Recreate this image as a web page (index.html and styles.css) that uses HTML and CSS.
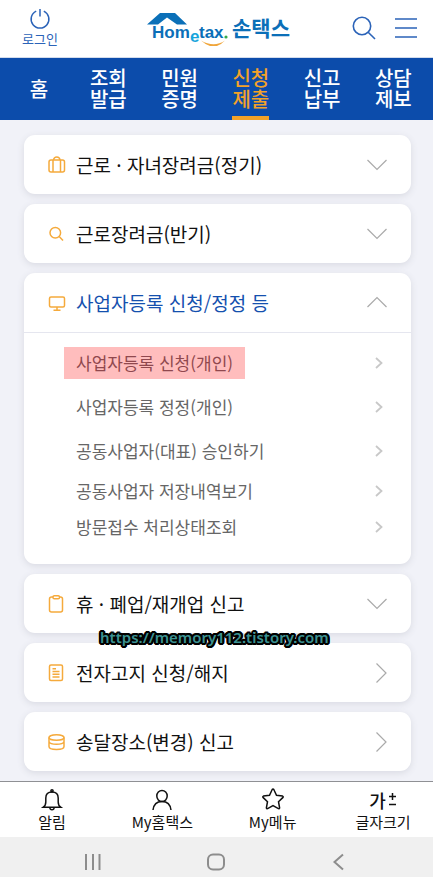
FILE: index.html
```html
<!DOCTYPE html>
<html lang="ko">
<head>
<meta charset="utf-8">
<meta name="viewport" content="width=device-width, initial-scale=1">
<title>Hometax 손택스</title>
<link rel="stylesheet" href="styles.css">
</head>
<body>
<header class="top">
  <a class="login" href="#">
    <svg width="22" height="22" viewBox="0 0 22 22"><path d="M7.2 3.1A8.9 8.9 0 1 0 14.8 3.1M11 1v7.500"/></svg>
    <span>로그인</span>
  </a>
  <a class="logo" href="#">
    <svg width="146" height="36" viewBox="0 0 146 36">
      <path class="roof" d="M0 14.500 13 3H28L40 14.500H30L20 7.500 11 14.500Z"/>
      <text class="latin" x="5" y="28">Hom</text>
      <text class="latin e" x="43" y="32">e</text>
      <text class="latin" x="52" y="28">tax</text>
      <circle class="dot" cx="79" cy="27" r="1.600"/>
      <path class="smile" d="M54 30.500Q67 38 78 30.500Q67 42.500 54 30.500Z"/>
      <text class="hangul" x="85" y="26">손택스</text>
    </svg>
  </a>
  <div class="tools">
    <button type="button" aria-label="검색"><svg width="24" height="24" viewBox="0 0 24 24"><circle cx="10" cy="10" r="8.700"/><path d="M16.200 16.200 23 23"/></svg></button>
    <button type="button" aria-label="전체 메뉴"><svg width="24" height="24" viewBox="0 0 24 24"><path d="M1 3h22M1 12h22M1 21h22"/></svg></button>
  </div>
</header>

<nav class="tabs">
  <a href="#"><span>홈</span></a>
  <a href="#"><span>조회<br>발급</span></a>
  <a href="#"><span>민원<br>증명</span></a>
  <a href="#" class="current"><span>신청<br>제출</span></a>
  <a href="#"><span>신고<br>납부</span></a>
  <a href="#"><span>상담<br>제보</span></a>
</nav>

<main>
  <section class="card">
    <button type="button" class="head">
      <svg class="icon" width="18" height="18" viewBox="0 0 18 18"><rect x="1" y="4" width="15.500" height="12" rx="2"/><path d="M5 4v12M12.500 4v12M5.500 4Q6 1 8.800 1T12 4"/></svg>
      <span class="title">근로 · 자녀장려금(정기)</span>
      <svg class="arrow" width="20" height="20" viewBox="0 0 20 20"><path d="M.500 5 10 14.500 19.500 5"/></svg>
    </button>
  </section>
  <section class="card">
    <button type="button" class="head">
      <svg class="icon" width="18" height="18" viewBox="0 0 18 18"><circle cx="7.300" cy="7.700" r="5.300"/><path d="M11.200 11.600 15 15.500"/></svg>
      <span class="title">근로장려금(반기)</span>
      <svg class="arrow" width="20" height="20" viewBox="0 0 20 20"><path d="M.500 5 10 14.500 19.500 5"/></svg>
    </button>
  </section>
  <section class="card open">
    <button type="button" class="head">
      <svg class="icon" width="18" height="18" viewBox="0 0 18 18"><rect x="1.500" y="3" width="15" height="10" rx="1.500"/><path d="M9 13v3M5.500 16.200h7"/></svg>
      <span class="title">사업자등록 신청/정정 등</span>
      <svg class="arrow" width="20" height="20" viewBox="0 0 20 20"><path d="M.500 14 10 4.500 19.500 14"/></svg>
    </button>
    <ul class="sub">
      <li><a href="#"><span class="mark">사업자등록 신청(개인)</span><svg width="8" height="12" viewBox="0 0 8 12"><path d="M1 1l5.500 5L1 11"/></svg></a></li>
      <li><a href="#"><span>사업자등록 정정(개인)</span><svg width="8" height="12" viewBox="0 0 8 12"><path d="M1 1l5.500 5L1 11"/></svg></a></li>
      <li><a href="#"><span>공동사업자(대표) 승인하기</span><svg width="8" height="12" viewBox="0 0 8 12"><path d="M1 1l5.500 5L1 11"/></svg></a></li>
      <li class="tight"><a href="#"><span>공동사업자 저장내역보기</span><svg width="8" height="12" viewBox="0 0 8 12"><path d="M1 1l5.500 5L1 11"/></svg></a></li>
      <li class="tight"><a href="#"><span>방문접수 처리상태조회</span><svg width="8" height="12" viewBox="0 0 8 12"><path d="M1 1l5.500 5L1 11"/></svg></a></li>
    </ul>
  </section>
  <section class="card">
    <button type="button" class="head">
      <svg class="icon" width="18" height="18" viewBox="0 0 18 18"><rect x="1.500" y="2" width="13" height="15" rx="2"/><rect class="clip" x="5" y=".8" width="6.500" height="3" rx="1.300"/></svg>
      <span class="title">휴 · 폐업/재개업 신고</span>
      <svg class="arrow" width="20" height="20" viewBox="0 0 20 20"><path d="M.500 5 10 14.500 19.500 5"/></svg>
    </button>
    <span class="stamp">https://memory112.tistory.com</span>
  </section>
  <section class="card">
    <a class="head" href="#">
      <svg class="icon" width="18" height="18" viewBox="0 0 18 18"><rect x="1.500" y="1" width="13" height="15.500" rx="1.500"/><path d="M4.500 4.800h3.500M4.500 7.500h7M4.500 10.200h7M4.500 13h7"/></svg>
      <span class="title">전자고지 신청/해지</span>
      <svg class="arrow" width="20" height="20" viewBox="0 0 20 20"><path d="M9.500.500 19 10 9.500 19.500"/></svg>
    </a>
  </section>
  <section class="card">
    <a class="head" href="#">
      <svg class="icon" width="18" height="18" viewBox="0 0 18 18"><ellipse cx="8.500" cy="4.500" rx="7.500" ry="2.800"/><path d="M1 4.500v9Q1 16.500 8.500 16.500T16 13.500v-9M1 8.800q1 2.500 7.500 2.500T16 8.800"/></svg>
      <span class="title">송달장소(변경) 신고</span>
      <svg class="arrow" width="20" height="20" viewBox="0 0 20 20"><path d="M9.500.500 19 10 9.500 19.500"/></svg>
    </a>
  </section>
</main>

<nav class="dock">
  <a href="#"><svg width="24" height="24" viewBox="0 0 24 24"><path d="M3.300 19.200Q5.800 17.500 5.800 14V10Q5.800 4 12 4T18.200 10V14Q18.200 17.500 20.700 19.200ZM9.800 19.500q.2 2.300 2.200 2.300t2.200-2.300"/><circle cx="12" cy="2.800" r="1.100"/></svg><span>알림</span></a>
  <a href="#"><svg width="24" height="24" viewBox="0 0 24 24"><ellipse cx="12" cy="8" rx="5.200" ry="5.600"/><path d="M3 22Q4 13.500 12 13.500T21 22"/></svg><span>My홈택스</span></a>
  <a href="#"><svg width="24" height="24" viewBox="0 0 24 24"><path d="M11.200 1.500q.8-1.200 1.600 0l2.700 5.800 6.100.8q1 .4.400 1.300l-4.500 4.300 1.100 6.200q-.1 1.100-1.200.7L12 17.600l-5.400 3q-1.100.4-1.200-.7l1.100-6.200L2 9.400q-.600-.9.400-1.300l6.100-.8Z"/></svg><span>My메뉴</span></a>
  <a href="#"><span class="size">가<svg width="9" height="16" viewBox="0 0 9 16"><path d="M4.500 1v7M1 4.500h7M1 12.500h7"/></svg></span><span>글자크기</span></a>
</nav>

<footer class="system">
  <button type="button" aria-label="최근 앱"><svg width="24" height="24" viewBox="0 0 24 24"><path d="M5 4v16M12 4v16M18.500 4v16"/></svg></button>
  <button type="button" aria-label="홈 화면"><svg width="24" height="24" viewBox="0 0 24 24"><rect x="4" y="4.500" width="16" height="15" rx="5"/></svg></button>
  <button type="button" aria-label="뒤로"><svg width="24" height="24" viewBox="0 0 24 24"><path d="M16 4.500 7.500 12l8.500 7.500"/></svg></button>
</footer>
</body>
</html>
```
FILE: styles.css
```css
* { box-sizing: border-box; }

body {
  margin: 0;
  background: #fff;
  color: #111;
  font-family: "Noto Sans CJK KR", sans-serif;
}

a { color: inherit; text-decoration: none; }

button {
  padding: 0;
  border: 0;
  background: none;
  color: inherit;
  font: inherit;
}

svg {
  display: block;
  flex: none;
  fill: none;
  stroke: currentColor;
}

.top {
  display: grid;
  grid-template-columns: 1fr auto 1fr;
  align-items: center;
  height: 58px;
  padding: 0 15px 2px 22px;
  border-bottom: 1px solid #d3dcec;
  color: #2b63b8;
}

.login {
  display: flex;
  flex-direction: column;
  align-items: center;
  justify-self: start;
  font-size: 13px;
  line-height: 18px;
}

.login svg { stroke-width: 1.5; }

.logo .roof { fill: #0b70b8; stroke: none; }
.logo .dot { fill: #35ab4b; stroke: none; }
.logo .smile { fill: #f0a63c; stroke: none; }
.logo text { fill: #0b6fb8; stroke: none; font-weight: 700; }
.logo .latin { font-family: "Liberation Sans", sans-serif; font-size: 17px; }
.logo .e { fill: #17a5dc; }
.logo .hangul { font-size: 21px; }

.tools {
  display: flex;
  justify-self: end;
  gap: 18px;
}

.tools svg { stroke-width: 1.6; }

.tabs {
  display: grid;
  grid-template-columns: 19fr repeat(5, 20fr);
  height: 62px;
  padding: 0 4px 0 5px;
  background: #0c4cab;
  color: #fff;
  font-size: 20px;
  font-weight: 500;
  line-height: 21px;
}

.tabs a {
  display: flex;
  justify-content: center;
}

.tabs span {
  align-content: center;
  padding-top: 2px;
  border-bottom: 4px solid transparent;
}

.current { color: #f3a229; }
.tabs .current span { border-color: #f3a229; }

main {
  display: flex;
  flex-direction: column;
  gap: 10px;
  padding: 15px 22px 10px 24px;
  background: #f1f2f8;
}

.card {
  position: relative;
  border-radius: 11px;
  background: #fff;
  box-shadow: 0 2px 7px #d9dae2;
}

.head {
  display: flex;
  align-items: center;
  width: 100%;
  height: 59px;
  padding: 0 24px;
  font-size: 19px;
  line-height: 28px;
  text-align: left;
}

.icon {
  margin-right: 10px;
  color: #f5aa3c;
  stroke-width: 1.5;
}

.clip { fill: #fff; }

.title { flex: 1; padding-top: 1px; }

.arrow { color: #aaa; stroke-width: 1.2; }

.open .title { color: #1450ae; }

.sub {
  margin: 0;
  padding: 8px 28px 19px 52px;
  border-top: 1px solid #e5e6ef;
  list-style: none;
  color: #666;
  font-size: 17px;
  line-height: 32px;
}

.sub a {
  display: flex;
  align-items: center;
  justify-content: space-between;
  height: 44px;
}

.sub .tight a { height: 36px; }

.sub svg { color: #c8c8c8; stroke-width: 1.8; }

.mark {
  margin-left: -12px;
  padding: 0 12px;
  background: #ffbdbd;
  color: #90484e;
}

.stamp {
  position: absolute;
  z-index: 1;
  left: 76px;
  bottom: -14px;
  color: #3b9292;
  font-family: "Noto Sans", sans-serif;
  font-size: 15px;
  font-weight: 600;
  line-height: 20px;
  text-shadow:
    2px 0 #000, -2px 0 #000, 0 2px #000, 0 -2px #000,
    1px 2px #000, -1px 2px #000, 1px -2px #000, -1px -2px #000,
    2px 1px #000, -2px 1px #000, 2px -1px #000, -2px -1px #000;
}

.dock {
  display: flex;
  justify-content: space-between;
  height: 56px;
  padding: 6px 20px 0 22px;
  border-top: 1px solid #8f9094;
  font-size: 15px;
  line-height: 20px;
}

.dock a {
  display: flex;
  flex-direction: column;
  align-items: center;
  width: 60px;
  white-space: nowrap;
}

.dock svg { stroke-width: 1.5; }

.size {
  display: flex;
  align-items: center;
  gap: 2px;
  height: 24px;
  font-size: 18px;
  font-weight: 500;
}

.system {
  display: flex;
  align-items: center;
  justify-content: space-between;
  height: 40px;
  padding: 10px 82px 0 81px;
  background: #f0f0f0;
  color: #8d8d8d;
}

.system svg { stroke-width: 2; }
```
